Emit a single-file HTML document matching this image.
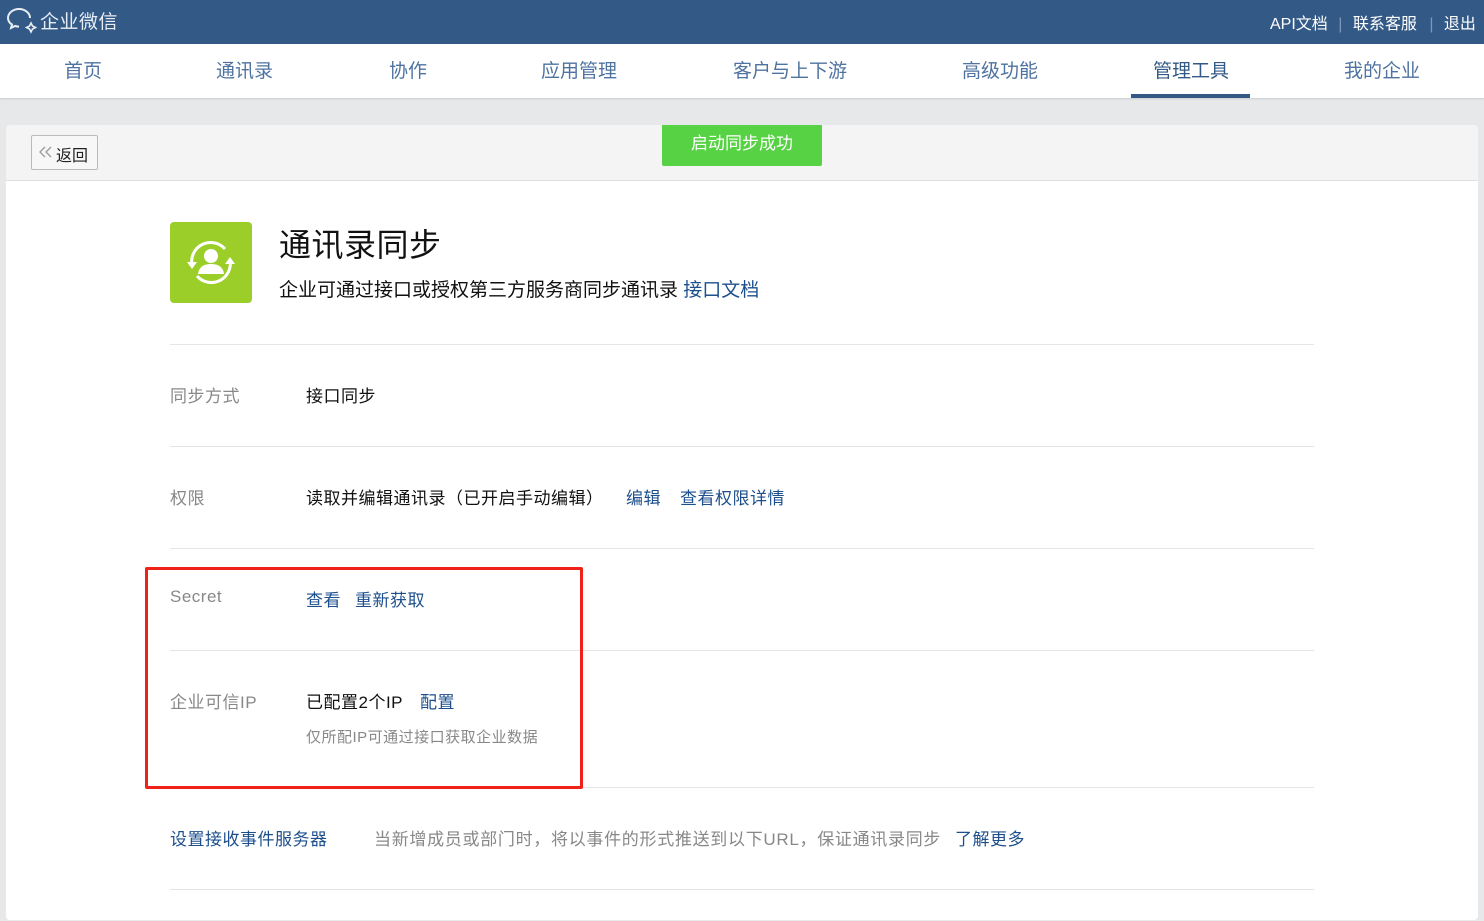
<!DOCTYPE html>
<html><head><meta charset="utf-8"><style>
*{margin:0;padding:0;box-sizing:border-box}
body{width:1484px;height:921px;overflow:hidden;background:#e7e8ea;font-family:"Liberation Sans","Noto Sans CJK SC",sans-serif;position:relative}
.a{position:absolute;white-space:nowrap}
.top{position:absolute;left:0;top:0;width:1484px;height:44px;background:#335a86}
.nav{position:absolute;left:0;top:44px;width:1484px;height:54px;background:#fff;box-shadow:0 1px 2px rgba(0,0,0,.12)}
.nav span{position:absolute;top:12px;font-size:19px;color:#4f73a0}
.card{position:absolute;left:6px;top:125px;width:1472px;height:795px;background:#fff;border-radius:4px}
.tb{position:absolute;left:6px;top:125px;width:1472px;height:56px;background:#f4f4f4;border-bottom:1px solid #e0e0e0;border-radius:4px 4px 0 0}
.hr{position:absolute;left:170px;width:1144px;height:1px;background:#e5e5e5}
.lab{font-size:17px;color:#888;letter-spacing:.5px}
.val{font-size:17px;color:#111;letter-spacing:.5px}
.lnk{font-size:17px;color:#1d4f8c;letter-spacing:.5px}
</style></head><body>
<div class="top"></div>
<svg class="a" style="left:6px;top:7px" width="32" height="28" viewBox="0 0 32 28"><path d="M13 2C7 2 2 6 2 11c0 3 1.5 5 4 6.5L5 21l4-2c1.3.4 2.6.6 4 .6" fill="none" stroke="#e8edf3" stroke-width="2"/><path d="M13 2c6 0 11 4 11 9" fill="none" stroke="#e8edf3" stroke-width="2"/><path d="M25 16l1.5 3 3 1.5-3 1.5-1.5 3-1.5-3-3-1.5 3-1.5z" fill="none" stroke="#e8edf3" stroke-width="1.6"/></svg>
<div class="a" style="left:40px;top:7px;font-size:19px;color:#e8edf3;letter-spacing:.5px">企业微信</div>
<div class="a" style="left:1270px;top:10px;font-size:16px;color:#fff">API文档 <span style="color:#7f98b8;margin:0 6px">|</span> 联系客服 <span style="color:#7f98b8;margin:0 6px 0 8px">|</span> 退出</div>
<div class="nav">
<span style="left:64px">首页</span><span style="left:216px">通讯录</span><span style="left:389px">协作</span><span style="left:541px">应用管理</span><span style="left:733px">客户与上下游</span><span style="left:962px">高级功能</span><span style="left:1153px;color:#335a86">管理工具</span><span style="left:1344px">我的企业</span>
<div class="a" style="left:1131px;top:50px;width:119px;height:4px;background:#335a86"></div>
</div>
<div class="card"></div>
<div class="tb"></div>
<div class="a" style="left:31px;top:135px;width:67px;height:35px;border:1px solid #bbb;border-radius:2px;background:#f7f7f7"></div>
<svg class="a" style="left:39px;top:146px" width="14" height="12" viewBox="0 0 14 12"><path d="M6 1L1 6l5 5M12 1L7 6l5 5" fill="none" stroke="#999" stroke-width="1.3"/></svg>
<div class="a" style="left:56px;top:142px;font-size:16px;color:#222">返回</div>
<div class="a" style="left:662px;top:125px;width:160px;height:41px;background:#58d245;border-radius:0 0 2px 2px;color:#fff;font-size:17px;text-align:center;line-height:38px">启动同步成功</div>
<div class="a" style="left:170px;top:222px;width:82px;height:81px;background:#9bce29;border-radius:4px"></div>
<svg class="a" style="left:170px;top:222px" width="82" height="81" viewBox="0 0 82 81"><path d="M22 43a19 19 0 0 1 33-16" fill="none" stroke="#fff" stroke-width="3"/><path d="M60 38a19 19 0 0 1-33 16" fill="none" stroke="#fff" stroke-width="3"/><path d="M17 40l5 7 5-7z" fill="#fff"/><path d="M55 42l5-7 5 7z" fill="#fff"/><circle cx="41" cy="34" r="7" fill="#fff"/><path d="M28 52c1-8 7-10 13-10s12 2 13 10z" fill="#fff"/></svg>
<div class="a" style="left:279px;top:220px;font-size:32px;color:#111;letter-spacing:.5px">通讯录同步</div>
<div class="a" style="left:279px;top:275px;font-size:19px;color:#111">企业可通过接口或授权第三方服务商同步通讯录 <span style="color:#1d4f8c">接口文档</span></div>
<div class="hr" style="top:344px"></div>
<div class="hr" style="top:446px"></div>
<div class="hr" style="top:548px"></div>
<div class="hr" style="top:650px"></div>
<div class="hr" style="top:787px"></div>
<div class="hr" style="top:889px"></div>
<div class="a lab" style="left:170px;top:382px">同步方式</div>
<div class="a val" style="left:306px;top:382px">接口同步</div>
<div class="a lab" style="left:170px;top:484px">权限</div>
<div class="a val" style="left:306px;top:484px">读取并编辑通讯录（已开启手动编辑）</div>
<div class="a lnk" style="left:626px;top:484px">编辑</div>
<div class="a lnk" style="left:680px;top:484px">查看权限详情</div>
<div class="a lab" style="left:170px;top:587px">Secret</div>
<div class="a lnk" style="left:306px;top:586px">查看</div>
<div class="a lnk" style="left:355px;top:586px">重新获取</div>
<div class="a lab" style="left:170px;top:688px">企业可信IP</div>
<div class="a val" style="left:306px;top:688px">已配置2个IP</div>
<div class="a lnk" style="left:420px;top:688px">配置</div>
<div class="a" style="left:306px;top:726px;font-size:15px;color:#888;letter-spacing:.5px">仅所配IP可通过接口获取企业数据</div>
<div class="a" style="left:145px;top:567px;width:438px;height:222px;border:3px solid #f02116;border-radius:2px"></div>
<div class="a lnk" style="left:170px;top:825px">设置接收事件服务器</div>
<div class="a lab" style="left:374px;top:825px;letter-spacing:.7px">当新增成员或部门时，将以事件的形式推送到以下URL，保证通讯录同步</div>
<div class="a lnk" style="left:955px;top:825px">了解更多</div>
</body></html>
